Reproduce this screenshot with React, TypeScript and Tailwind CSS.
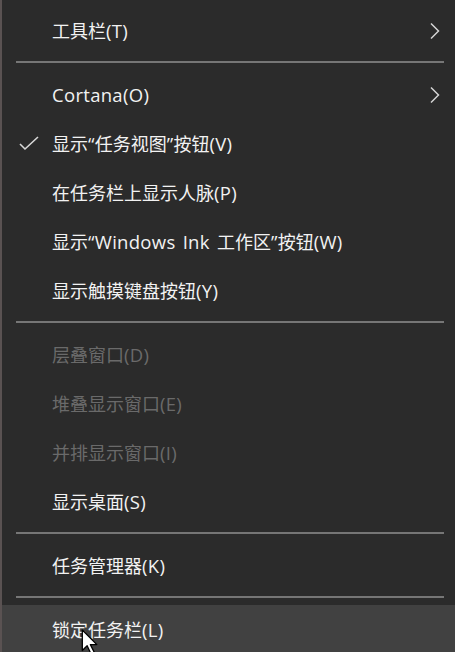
import React from 'react';

type Item = { label: string; disabled?: boolean; checked?: boolean; sub?: boolean; hover?: boolean } | 'sep';

const items: Item[] = [
  { label: '工具栏(T)', sub: true },
  'sep',
  { label: 'Cortana(O)', sub: true },
  { label: '显示“任务视图”按钮(V)', checked: true },
  { label: '在任务栏上显示人脉(P)' },
  { label: '显示“Windows Ink 工作区”按钮(W)' },
  { label: '显示触摸键盘按钮(Y)' },
  'sep',
  { label: '层叠窗口(D)', disabled: true },
  { label: '堆叠显示窗口(E)', disabled: true },
  { label: '并排显示窗口(I)', disabled: true },
  { label: '显示桌面(S)' },
  'sep',
  { label: '任务管理器(K)' },
  'sep',
  { label: '锁定任务栏(L)', hover: true },
];

// latin runs in the original menu font are a bit wider than the CJK font's latin
function Label({ text }: { text: string }) {
  const parts = text.split(/([\x20-\x7E“”]+)/).filter(Boolean);
  return (
    <>
      {parts.map((p, i) =>
        /^[\x20-\x7E“”]+$/.test(p) ? (
          <span key={i} className="text-[18.5px] tracking-[0.3px] [word-spacing:2px]" style={{ fontFamily: '"Open Sans", sans-serif' }}>
            {p}
          </span>
        ) : (
          <span key={i}>{p}</span>
        )
      )}
    </>
  );
}

function Check() {
  return (
    <svg width="22" height="16" viewBox="0 0 22 16" className="absolute left-[16px] top-[17px]">
      <polyline points="2,8 7,13 20,1" fill="none" stroke="#d8d8d8" strokeWidth="1.6" />
    </svg>
  );
}

function Chevron() {
  return (
    <svg width="12" height="18" viewBox="0 0 12 18" className="shrink-0">
      <polyline points="2,1.5 9.5,9 2,16.5" fill="none" stroke="#d4d4d4" strokeWidth="1.5" />
    </svg>
  );
}

function Cursor() {
  return (
    <svg width="22" height="28" viewBox="0 0 20 26" className="absolute left-[79px] top-[629px]">
      <path d="M1 1 L1 20 L5.5 15.5 L9 23 L12 21.5 L8.5 14.5 L14.5 14.5 Z" fill="#ffffff" stroke="#000000" strokeWidth="1.2" strokeLinejoin="round" />
    </svg>
  );
}

export default function App() {
  return (
    <div
      className="relative w-[455px] h-[652px] overflow-hidden bg-[#2b2b2b] border-l-2 border-[#5a5252] pt-[6px]"
      style={{ fontFamily: '"Noto Sans CJK SC", "Open Sans", sans-serif' }}
    >
      {items.map((it, i) =>
        it === 'sep' ? (
          <div key={i} className="h-[15px] pt-[6px] pl-[14px] pr-[11px]">
            <div className="h-[2px] bg-[#767676]" />
          </div>
        ) : (
          <div
            key={i}
            className={`relative h-[49px] flex items-center pl-[50px] pr-[14px] ${it.hover ? 'bg-[#414141]' : ''}`}
          >
            {it.checked && <Check />}
            <span className={`flex-1 text-[18px] leading-none ${it.disabled ? 'text-[#6a6a6a]' : 'text-[#f2f2f2]'}`}>
              <Label text={it.label} />
            </span>
            {it.sub && <Chevron />}
          </div>
        )
      )}
      <Cursor />
    </div>
  );
}
